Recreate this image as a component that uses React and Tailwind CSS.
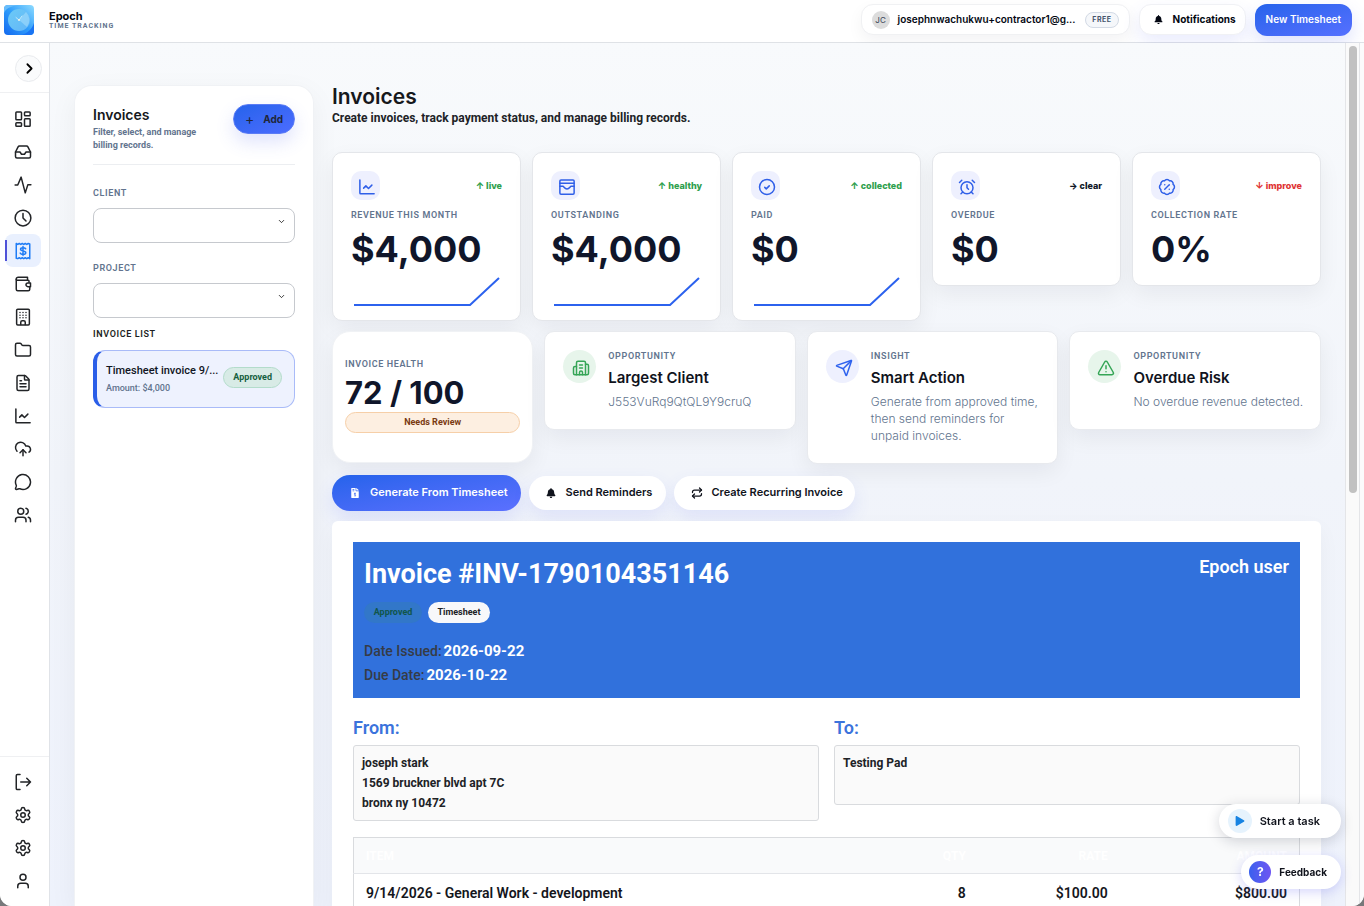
import {
  AlarmClock,
  BadgePercent,
  Building2,
  ChevronDown,
  ChevronRight,
  CloudUpload,
  FileText,
  Folder,
  Inbox,
  MessageCircle,
  Repeat,
  Send,
  Settings,
  TriangleAlert,
  User,
  Users,
} from 'lucide-react';
import { FaBell, FaFileInvoiceDollar, FaPlay } from 'react-icons/fa';

function Icon({ children, size = 18, strokeWidth = 2 }) {
  return (
    <svg width={size} height={size} viewBox="0 0 24 24" fill="none" stroke="currentColor" strokeWidth={strokeWidth} strokeLinecap="round" strokeLinejoin="round" aria-hidden="true">
      {children}
    </svg>
  );
}

const DashboardIcon = () => (
  <Icon>
    <rect x="2.5" y="2.5" width="7.5" height="10.5" rx="1" />
    <rect x="14" y="2.5" width="7.5" height="5" rx="1" />
    <rect x="14" y="11.5" width="7.5" height="10" rx="1" />
    <rect x="2.5" y="17" width="7.5" height="4.5" rx="1" />
  </Icon>
);

const InboxIcon = () => <Inbox {...line} strokeWidth={2} />;

const ActivityIcon = () => (
  <Icon>
    <path d="M1.500 12H5L9.500 1.500 15 22.500 18.500 11.500H22.500" />
  </Icon>
);

const ClockIcon = () => (
  <Icon>
    <circle cx="12" cy="12" r="10.5" />
    <path d="M12 6V12l4 4" />
  </Icon>
);

const ReceiptIcon = () => (
  <Icon strokeWidth={2}>
    <path d="M3 2l2 1.2 2-1.2 2 1.2 2-1.2 2 1.2 2-1.2 2 1.2 2-1.2 2 .6v19.6l-2-1.200-2 1.200-2-1.200-2 1.200-2-1.200-2 1.200-2-1.200-2 1.200-2-.6z" />
    <path d="M15.500 9c-.6-1-1.800-1.500-3.500-1.500-2 0-3.300.8-3.300 2.200 0 3.300 7 1.300 7 4.600 0 1.400-1.400 2.200-3.600 2.200-1.900 0-3.200-.6-3.800-1.700M12 6v12" />
  </Icon>
);

const WalletIcon = () => (
  <Icon>
    <path d="M20 9.500V8a1 1 0 0 0-1-1H4.500A1.500 1.500 0 0 1 3 5.500v0A2.500 2.500 0 0 1 5.500 3H18v4" />
    <path d="M3 5.500V19a2 2 0 0 0 2 2h14a2 2 0 0 0 2-2v-2.500" />
    <path d="M22 10.500H18.500a2.500 2.500 0 0 0 0 5H22z" />
  </Icon>
);

const OfficeIcon = () => (
  <Icon>
    <rect x="3.5" y="1.5" width="17" height="21" rx="1.500" />
    <path d="M9 22v-3a2 2 0 0 1 2-2h2a2 2 0 0 1 2 2v3" />
    <path d="M8 6h.01M12 6h.01M16 6h.01M8 9.500h.01M12 9.500h.01M16 9.500h.01M8 13h.01M12 13h.01M16 13h.01" />
  </Icon>
);

const ChartIcon = () => (
  <Icon>
    <path d="M2.500 2.500V20a1 1 0 0 0 1 1H21.500" />
    <path d="M7.500 13.500l3-3 3.500 3.500 4.500-4.500" />
  </Icon>
);

const ExitIcon = () => (
  <Icon>
    <path d="M8 22H4.500a1.500 1.500 0 0 1-1.500-1.500V3.500a1.500 1.500 0 0 1 1.500-1.500H8" />
    <path d="M9 12h13M17 7l5 5-5 5" />
  </Icon>
);

const MailBoxIcon = () => (
  <Icon>
    <rect x="2.500" y="2.500" width="19" height="19" rx="1.500" />
    <path d="M2.500 7h19M2.500 11h4c1.500 0 2 3.500 5.500 3.500s4-3.500 5.500-3.500h4" />
  </Icon>
);

const CheckIcon = () => (
  <Icon>
    <circle cx="12" cy="12" r="10" />
    <path d="M9 12.500l2 2 4-4" />
  </Icon>
);

const Logo = () => (
  <svg width="30" height="30" viewBox="0 0 30 30" role="img" aria-label="Epoch logo">
    <defs>
      <linearGradient id="logoBg" x1="0" y1="1" x2="1" y2="0">
        <stop offset="0" stopColor="#1268ee" />
        <stop offset="0.5" stopColor="#2f9dfb" />
        <stop offset="1" stopColor="#8fdcff" />
      </linearGradient>
      <linearGradient id="logoFace" x1="0" y1="0" x2="1" y2="1">
        <stop offset="0" stopColor="#6ccaf6" />
        <stop offset="1" stopColor="#62b6f8" />
      </linearGradient>
    </defs>
    <rect width="30" height="30" rx="4" fill="url(#logoBg)" />
    <path d="M0 8C2 3 8 1 14 0H4a4 4 0 0 0-4 4z" fill="#69bdfb" />
    <path d="M30 18c-2 6-6 10-13 12h9a4 4 0 0 0 4-4z" fill="#1a74f3" />
    <circle cx="15" cy="15" r="11" fill="url(#logoFace)" />
    <path d="M15 15l7-8a11 11 0 0 1 1 15z" fill="#a4dcfb" opacity="0.6" />
    <path d="M12 12.500L15 15l3-4" stroke="#d5f2fb" strokeWidth="0.8" fill="none" strokeLinecap="round" />
    <circle cx="15" cy="15" r="1" fill="#f1f5e8" />
  </svg>
);

const line = { size: 18, strokeWidth: 2, 'aria-hidden': true };

const navItems = [
  { label: 'Dashboard', icon: <DashboardIcon /> },
  { label: 'Inbox', icon: <InboxIcon /> },
  { label: 'Activity', icon: <ActivityIcon /> },
  { label: 'Time', icon: <ClockIcon /> },
  { label: 'Invoices', icon: <ReceiptIcon />, active: true },
  { label: 'Wallet', icon: <WalletIcon /> },
  { label: 'Clients', icon: <OfficeIcon /> },
  { label: 'Projects', icon: <Folder {...line} /> },
  { label: 'Documents', icon: <FileText {...line} /> },
  { label: 'Reports', icon: <ChartIcon /> },
  { label: 'Upload', icon: <CloudUpload {...line} /> },
  { label: 'Messages', icon: <MessageCircle {...line} /> },
  { label: 'Team', icon: <Users {...line} /> },
];

const footerItems = [
  { label: 'Log out', icon: <ExitIcon /> },
  { label: 'Settings', icon: <Settings {...line} /> },
  { label: 'Preferences', icon: <Settings {...line} /> },
  { label: 'Profile', icon: <User {...line} /> },
];

const kpis = [
  { label: 'Revenue this month', value: '$4,000', trend: '↑ live', tone: 'text-[#2fa04e]', icon: <ChartIcon />, spark: true },
  { label: 'Outstanding', value: '$4,000', trend: '↑ healthy', tone: 'text-[#2fa04e]', icon: <MailBoxIcon />, spark: true },
  { label: 'Paid', value: '$0', trend: '↑ collected', tone: 'text-[#2fa04e]', icon: <CheckIcon />, spark: true },
  { label: 'Overdue', value: '$0', trend: '→ clear', tone: 'text-gray-900', icon: <AlarmClock {...line} /> },
  { label: 'Collection rate', value: '0%', trend: '↓ improve', tone: 'text-[#e03535]', icon: <BadgePercent {...line} /> },
];

const insights = [
  { kind: 'Opportunity', title: 'Largest Client', text: 'J553VuRq9QtQL9Y9cruQ', icon: <Building2 {...line} />, tone: 'bg-[#e7f5eb] text-[#35a556]' },
  { kind: 'Insight', title: 'Smart Action', text: 'Generate from approved time, then send reminders for unpaid invoices.', icon: <Send {...line} />, tone: 'bg-[#eef0fe] text-[#2f63ee]' },
  { kind: 'Opportunity', title: 'Overdue Risk', text: 'No overdue revenue detected.', icon: <TriangleAlert {...line} />, tone: 'bg-[#e7f5eb] text-[#35a556]' },
];

const labelClass = 'text-[9px] leading-3 font-semibold tracking-[0.07em] uppercase';

function Header() {
  return (
    <header className="flex h-[43px] shrink-0 items-center border-b border-[#dfe2e6] bg-white pr-3 pb-[3px] pl-1">
      <Logo />
      <div className="ml-[15px] flex flex-col pt-px">
        <span className="font-[Inter] text-[11px] leading-3 font-bold text-gray-950">Epoch</span>
        <span className="text-[7px] leading-[9px] font-bold tracking-[1px] text-slate-500 uppercase">Time Tracking</span>
      </div>
      <div className="ml-auto flex items-center gap-[9px] font-[Inter] text-[10px] font-bold text-gray-950">
        <div className="flex h-[31px] w-[269px] items-center rounded-xl border border-[#f0f1f3] bg-white px-[10px] shadow-[0_6px_16px_rgba(15,23,42,0.05)]">
          <span className="flex size-[18px] shrink-0 items-center justify-center rounded-full bg-[#dcdcdc] text-[8px] font-normal text-gray-700">JC</span>
          <span className="ml-2 whitespace-nowrap font-semibold">josephnwachukwu+contractor1@g...</span>
          <span className="ml-auto rounded-full border border-[#d3dae5] bg-[#f5f7fa] px-[6px] text-[7px] leading-[14px] font-bold tracking-[0.5px] text-slate-600">FREE</span>
        </div>
        <button className="flex h-[31px] items-center gap-[10px] rounded-xl border border-[#f0f1f5] bg-white pr-[9px] pl-[14px] shadow-[0_8px_18px_rgba(79,100,240,0.12)]">
          <FaBell size={9} aria-hidden="true" />
          Notifications
        </button>
        <button className="h-8 rounded-xl bg-linear-to-br from-[#2463eb] to-[#5570ff] px-[11px] font-semibold text-white shadow-[0_8px_18px_rgba(79,100,240,0.18)]">New Timesheet</button>
      </div>
    </header>
  );
}

function NavLink({ item }) {
  return (
    <a
      href="#"
      aria-label={item.label}
      className={
        item.active
          ? 'flex h-[33px] w-9 items-center justify-center rounded-lg bg-[#e9f0fe] text-[#1f7cf5]'
          : 'flex h-[33px] w-9 items-center justify-center text-[#222427]'
      }
    >
      {item.active && <span className="-ml-[9px] mr-[7px] h-[21px] w-[2px] bg-[#4f52d8]" />}
      {item.icon}
    </a>
  );
}

function Sidebar() {
  return (
    <aside className="flex w-[50px] shrink-0 flex-col border-r border-[#e0e3e8] bg-white">
      <div className="flex h-[50px] items-center justify-end border-b border-[#eff0f2] pt-px pr-[7px]">
        <button aria-label="Expand menu" className="flex size-[27px] items-center justify-center rounded-full border border-[#e9ebee] bg-[#fafbfc] pl-[2px]">
          <ChevronRight size={17} strokeWidth={2.5} />
        </button>
      </div>
      <nav className="flex flex-col pt-[9px] pl-[5px]">
        {navItems.map((item) => (
          <NavLink key={item.label} item={item} />
        ))}
      </nav>
      <nav className="mt-auto flex flex-col border-t border-[#eff0f2] pt-2 pb-[9px] pl-[5px]">
        {footerItems.map((item) => (
          <NavLink key={item.label} item={item} />
        ))}
      </nav>
    </aside>
  );
}

function FilterSelect({ id, label }) {
  return (
    <div className="flex flex-col">
      <label htmlFor={id} className={`${labelClass} text-slate-500`}>{label}</label>
      <div className="mt-[9px] grid">
        <select id={id} className="col-start-1 row-start-1 h-[35px] w-full appearance-none rounded-lg border border-[#c6c9ce] bg-white px-3">
          <option></option>
        </select>
        <ChevronDown size={9} className="pointer-events-none col-start-1 row-start-1 mt-[9px] mr-[9px] justify-self-end" aria-hidden="true" />
      </div>
    </div>
  );
}

function InvoicePanel() {
  return (
    <section className="flex w-60 shrink-0 flex-col rounded-t-[18px] border border-b-0 border-[#f0f2f5] bg-white px-[18px] pt-[18px] shadow-[0_8px_28px_rgba(15,23,42,0.05)]">
      <div className="flex justify-between border-b border-[#eceef1] pb-3">
        <div>
          <h2 className="font-[Inter] text-[14px] leading-[21px] font-semibold text-[#16181c]">Invoices</h2>
          <p className="mt-px w-[120px] text-[9px] leading-[13px] font-bold text-slate-500">Filter, select, and manage billing records.</p>
        </div>
        <button className="flex h-[30px] w-[62px] items-center justify-center gap-[9px] rounded-full border border-[#5b7cf5] bg-linear-to-br from-[#2463eb] to-[#4b6cff] font-[Inter] text-[10px] font-bold text-[#20263a] shadow-[0_8px_18px_rgba(79,100,240,0.18)]">
          <span className="text-[14px] leading-3 font-normal">+</span>
          Add
        </button>
      </div>
      <div className="flex flex-col gap-[19px] pt-[22px]">
        <FilterSelect id="client" label="Client" />
        <FilterSelect id="project" label="Project" />
      </div>
      <h3 className={`${labelClass} mt-[10px] text-[#1d1f23]`}>Invoice list</h3>
      <button className="mt-[10px] flex h-[58px] items-center justify-between rounded-xl border border-l-4 border-[#a9bbf8] border-l-[#2a5ee8] bg-[#eef2fe] pr-3 pl-[9px] text-left whitespace-nowrap">
        <span className="flex flex-col gap-[3px]">
          <span className="text-[11px] leading-[14px] font-medium text-[#101523]">Timesheet invoice 9/...</span>
          <span className="text-[9px] leading-[14px] font-medium text-slate-500">Amount: $4,000</span>
        </span>
        <span className="mb-1 rounded-full border border-[#b3dccb] bg-[#d8ebe6] px-[9px] text-[9px] leading-[19px] font-bold text-[#15603f]">Approved</span>
      </button>
    </section>
  );
}

function KpiCard({ kpi }) {
  return (
    <article className="rounded-[10px] border border-[#e4e6ea] bg-white px-[18px] pt-[18px] pb-[15px] shadow-[0_8px_22px_rgba(15,23,42,0.06)]">
      <div className="flex items-center justify-between">
        <span className="flex size-[29px] items-center justify-center rounded-[10px] bg-[#eef0fe] pt-[3px] pl-[3px] text-[#2f5fe8]">{kpi.icon}</span>
        <span className={`font-[Inter] text-[9px] font-extrabold ${kpi.tone}`}>{kpi.trend}</span>
      </div>
      <h3 className={`${labelClass} mt-[9px] text-slate-500`}>{kpi.label}</h3>
      <p className="mt-[7px] font-[Inter] text-[36px] leading-[42px] font-bold text-[#10162a]">{kpi.value}</p>
      {kpi.spark && (
        <svg className="block w-full overflow-visible" height="35" viewBox="0 0 151 35" fill="none" stroke="#2c62ee" strokeWidth="2" aria-hidden="true">
          <path d="M3 35H119L148 8" />
        </svg>
      )}
    </article>
  );
}

function HealthCard() {
  return (
    <article className="flex h-[132px] flex-col rounded-[18px] border border-[#f0f2f5] bg-white px-3 pt-[26px] shadow-[0_8px_22px_rgba(15,23,42,0.06)]">
      <h3 className={`${labelClass} text-slate-500`}>Invoice health</h3>
      <p className="mt-[3px] font-[Inter] text-[31px] leading-[39px] font-bold text-[#10162a]">72 / 100</p>
      <span className="rounded-full border border-[#f6cfa8] bg-[#fdefe1] text-center text-[9px] leading-[19px] font-bold text-[#7a3a12]">Needs Review</span>
    </article>
  );
}

function InsightCard({ insight }) {
  return (
    <article className="flex items-start gap-3 rounded-[10px] border border-[#e8eaee] bg-white pt-[18px] pr-3 pb-[19px] pl-[18px] shadow-[0_8px_22px_rgba(15,23,42,0.06)]">
      <span className={`flex size-[33px] shrink-0 items-center justify-center rounded-full pt-[3px] pl-[3px] ${insight.tone}`}>{insight.icon}</span>
      <div>
        <p className={`${labelClass} text-slate-500`}>{insight.kind}</p>
        <h3 className="mt-[6px] font-[Inter] text-[15px] leading-5 font-semibold text-[#10131c]">{insight.title}</h3>
        <p className="mt-[5px] font-[Inter] text-[12px] leading-[17px] font-light text-slate-500">{insight.text}</p>
      </div>
    </article>
  );
}

function Actions() {
  return (
    <div className="flex items-center gap-2 font-[Inter] text-[11px] font-semibold text-[#10131c]">
      <button className="flex h-9 items-center gap-[10px] rounded-full bg-linear-to-br from-[#2463eb] to-[#5b70ff] pr-[13px] pb-px pl-[18px] text-white shadow-[0_8px_18px_rgba(79,100,240,0.15)]">
        <FaFileInvoiceDollar size={10} aria-hidden="true" />
        Generate From Timesheet
      </button>
      <button className="flex h-[34px] items-center gap-[10px] rounded-full bg-white pr-[14px] pb-px pl-[17px] shadow-[0_8px_18px_rgba(79,100,240,0.12)]">
        <FaBell size={10} aria-hidden="true" />
        Send Reminders
      </button>
      <button className="flex h-[34px] items-center gap-2 rounded-full bg-white pr-3 pb-px pl-[17px] shadow-[0_8px_18px_rgba(79,100,240,0.12)]">
        <Repeat size={12} strokeWidth={2.5} aria-hidden="true" />
        Create Recurring Invoice
      </button>
    </div>
  );
}

function Invoice() {
  return (
    <section className="rounded-t-[6px] bg-white p-[21px] pb-0 shadow-[0_8px_22px_rgba(15,23,42,0.04)]">
      <div className="flex h-[156px] justify-between bg-[#3171dc] px-[11px] pt-[14px] text-white">
        <div>
          <h2 className="text-[27px] leading-9 font-bold">Invoice #INV-1790104351146</h2>
          <div className="mt-[10px] flex gap-[6px] text-[9px] leading-[21px] font-bold">
            <span className="w-[58px] rounded-full bg-[#3277c9] text-center text-[#11564b]">Approved</span>
            <span className="w-[62px] rounded-full bg-[#f7f8fa] text-center text-[#202226]">Timesheet</span>
          </div>
          <dl className="mt-4 text-[14px] leading-6">
            <div className="flex gap-[2px]">
              <dt className="font-medium text-[#363b45]">Date Issued:</dt>
              <dd className="text-[15px] font-bold">2026-09-22</dd>
            </div>
            <div className="flex gap-[2px]">
              <dt className="font-medium text-[#363b45]">Due Date:</dt>
              <dd className="text-[15px] font-bold">2026-10-22</dd>
            </div>
          </dl>
        </div>
        <p className="text-[18px] leading-[22px] font-semibold">Epoch user</p>
      </div>
      <div className="mt-[18px] grid grid-cols-2 items-start gap-[15px]">
        <div>
          <h3 className="text-[18px] leading-6 font-semibold text-[#3b73dc]">From:</h3>
          <address className="mt-[5px] rounded-[3px] border border-[#d9dbde] bg-[#fafafa] p-2 pt-[7px] pb-[7px] text-[12px] leading-5 font-bold text-[#202226] not-italic">
            joseph stark<br />
            1569 bruckner blvd apt 7C<br />
            bronx ny 10472
          </address>
        </div>
        <div>
          <h3 className="text-[18px] leading-6 font-semibold text-[#3b73dc]">To:</h3>
          <address className="mt-[5px] min-h-[60px] rounded-[3px] border border-[#d9dbde] bg-[#fafafa] p-2 pt-[7px] pb-[7px] text-[12px] leading-5 font-bold text-[#202226] not-italic">Testing Pad</address>
        </div>
      </div>
      <table className="mt-4 w-full table-fixed border border-[#d9dbde] text-right text-[14px] font-semibold text-[#14161c]">
        <thead className="bg-[#f9fafb] text-[12px] text-white">
          <tr className="h-9 border-b border-[#e3e5e9]">
            <th className="w-[52%] px-3 text-left">ITEM</th>
            <th className="w-[14%] px-3">QTY</th>
            <th className="w-[15%] px-3">RATE</th>
            <th className="w-[19%] px-3">AMOUNT</th>
          </tr>
        </thead>
        <tbody>
          <tr className="h-10">
            <td className="px-3 text-left">9/14/2026 - General Work - development</td>
            <td className="px-3">8</td>
            <td className="px-3">$100.00</td>
            <td className="px-3">$800.00</td>
          </tr>
        </tbody>
      </table>
    </section>
  );
}

export default function App() {
  return (
    <div className="h-screen bg-[#77787a] font-[Roboto,sans-serif]">
      <div className="flex h-full flex-col overflow-hidden rounded-b-[12px] bg-white">
        <Header />
        <div className="flex min-h-0 flex-1">
          <Sidebar />
          <main className="flex min-w-0 flex-1 gap-[18px] overflow-hidden bg-linear-to-b from-[#f8fafc] via-[#f1f4fa] to-[#eef2fc] pt-[42px] pr-6 pl-6">
            <InvoicePanel />
            <div className="flex min-w-0 flex-1 flex-col">
              <h1 className="font-[Inter] text-[21px] leading-6 font-semibold text-[#16181c]">Invoices</h1>
              <p className="text-[12px] leading-[18px] font-bold text-[#202226]">Create invoices, track payment status, and manage billing records.</p>
              <div className="mt-[25px] grid grid-cols-5 items-start gap-[11px]">
                {kpis.map((kpi) => (
                  <KpiCard key={kpi.label} kpi={kpi} />
                ))}
              </div>
              <div className="mt-[10px] grid grid-cols-[4fr_5fr_5fr_5fr] items-start gap-[11px]">
                <HealthCard />
                {insights.map((insight) => (
                  <InsightCard key={insight.title} insight={insight} />
                ))}
              </div>
              <div className="mt-[11px] mb-[10px]">
                <Actions />
              </div>
              <Invoice />
            </div>
          </main>
          <div className="w-[15px] shrink-0 border-x border-[#e4e5e8] bg-[#fafafa] px-[3px] pt-[3px]" aria-hidden="true">
            <div className="h-[52%] w-2 rounded-full bg-[#c1c1c1]" />
          </div>
          <div className="w-1 shrink-0 bg-[#fbfbfc]" />
        </div>
      </div>

      <div className="fixed right-[23px] bottom-[17px] flex flex-col items-end gap-[17px] font-[Inter] text-[#10131c]">
        <button className="flex h-[34px] items-center gap-2 rounded-full bg-white pr-[21px] pl-[9px] text-[11px] font-semibold shadow-[0_3px_14px_rgba(15,23,42,0.18)]">
          <span className="flex size-6 items-center justify-center rounded-full bg-[#e6f3fd] text-[#1683e2]">
            <FaPlay size={10} aria-hidden="true" />
          </span>
          Start a task
        </button>
        <button className="flex h-[34px] items-center gap-2 rounded-full bg-white pr-[14px] pl-2 text-[10px] font-bold shadow-[0_3px_12px_rgba(90,90,240,0.25)]">
          <span className="flex size-[22px] items-center justify-center rounded-full bg-linear-to-r from-[#3860ee] to-[#6d56f2] text-[12px] text-white">?</span>
          Feedback
        </button>
      </div>
    </div>
  );
}
